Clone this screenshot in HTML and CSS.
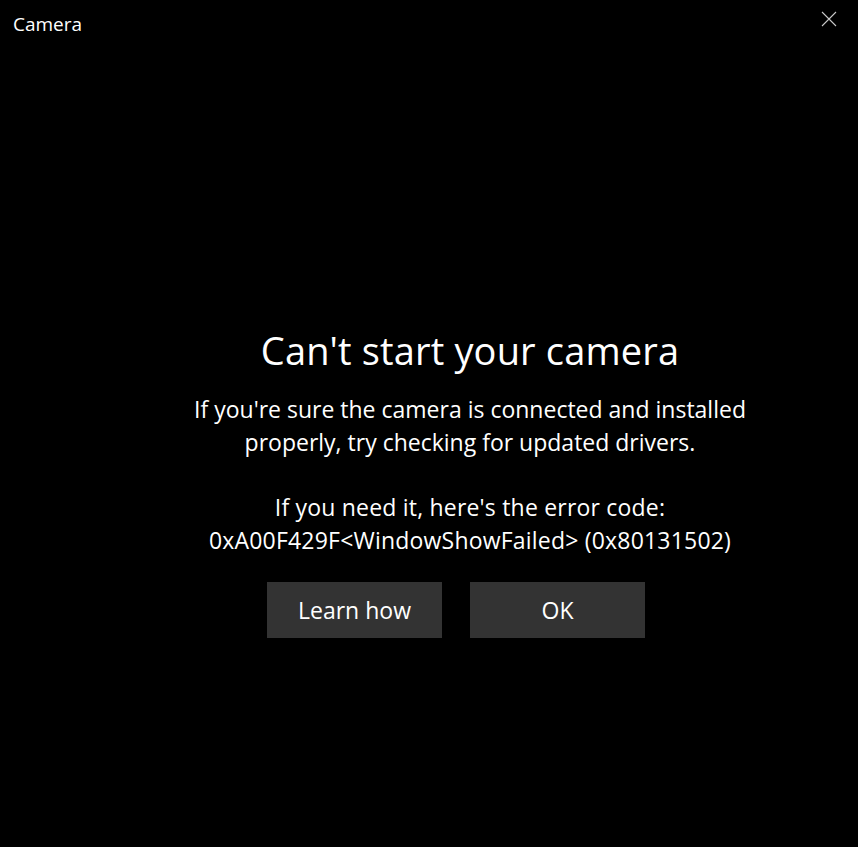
FILE: index.html
```html
<!DOCTYPE html>
<html lang="en">
<head>
<meta charset="utf-8">
<title>Camera</title>
<link rel="stylesheet" href="styles.css">
</head>
<body>
<div class="window">
  <header class="titlebar">
    <span class="app-title">Camera</span>
    <button class="close" aria-label="Close">
      <svg width="16" height="16" viewBox="0 0 16 16"><path d="M1 1L15 15M15 1L1 15" stroke="#c8c8c8" stroke-width="1.1" fill="none"/></svg>
    </button>
  </header>
  <main class="content">
    <h1 class="heading">Can't start your camera</h1>
    <p class="message">If you're sure the camera is connected and installed<br>properly, try checking for updated drivers.</p>
    <p class="message code">If you need it, here's the error code:<br>0xA00F429F&lt;WindowShowFailed&gt; (0x80131502)</p>
    <div class="actions">
      <button class="btn">Learn how</button>
      <button class="btn">OK</button>
    </div>
  </main>
</div>
</body>
</html>
```
FILE: styles.css
```css
html, body {
  margin: 0;
  padding: 0;
  background: #000;
  height: 100%;
}
body {
  font-family: "Open Sans", "Noto Sans", sans-serif;
  color: #fff;
}
.window {
  height: 847px;
  display: flex;
  flex-direction: column;
}
.titlebar {
  height: 48px;
  display: flex;
  align-items: flex-start;
  justify-content: space-between;
}
.app-title {
  font-size: 19px;
  margin: 12px 0 0 13px;
  line-height: 24px;
}
.close {
  background: none;
  border: none;
  padding: 0;
  margin: 11px 21px 0 0;
  width: 16px;
  height: 16px;
  display: flex;
}
.content {
  display: flex;
  flex-direction: column;
  align-items: center;
  padding: 278px 0 0 82px;
}
.heading {
  font-weight: 400;
  font-size: 38px;
  line-height: 48px;
  margin: 0;
  letter-spacing: 0.15px;
}
.message {
  font-size: 23px;
  line-height: 32.5px;
  margin: 19px 0 0;
  text-align: center;
}
.message.code {
  margin-top: 33px;
  letter-spacing: 0.2px;
}
.actions {
  display: flex;
  gap: 28px;
  margin-top: 26px;
  padding-right: 28px;
}
.btn {
  width: 175px;
  height: 56px;
  background: #333333;
  color: #fff;
  border: none;
  font-family: inherit;
  font-size: 23px;
  padding: 0;
}
```
